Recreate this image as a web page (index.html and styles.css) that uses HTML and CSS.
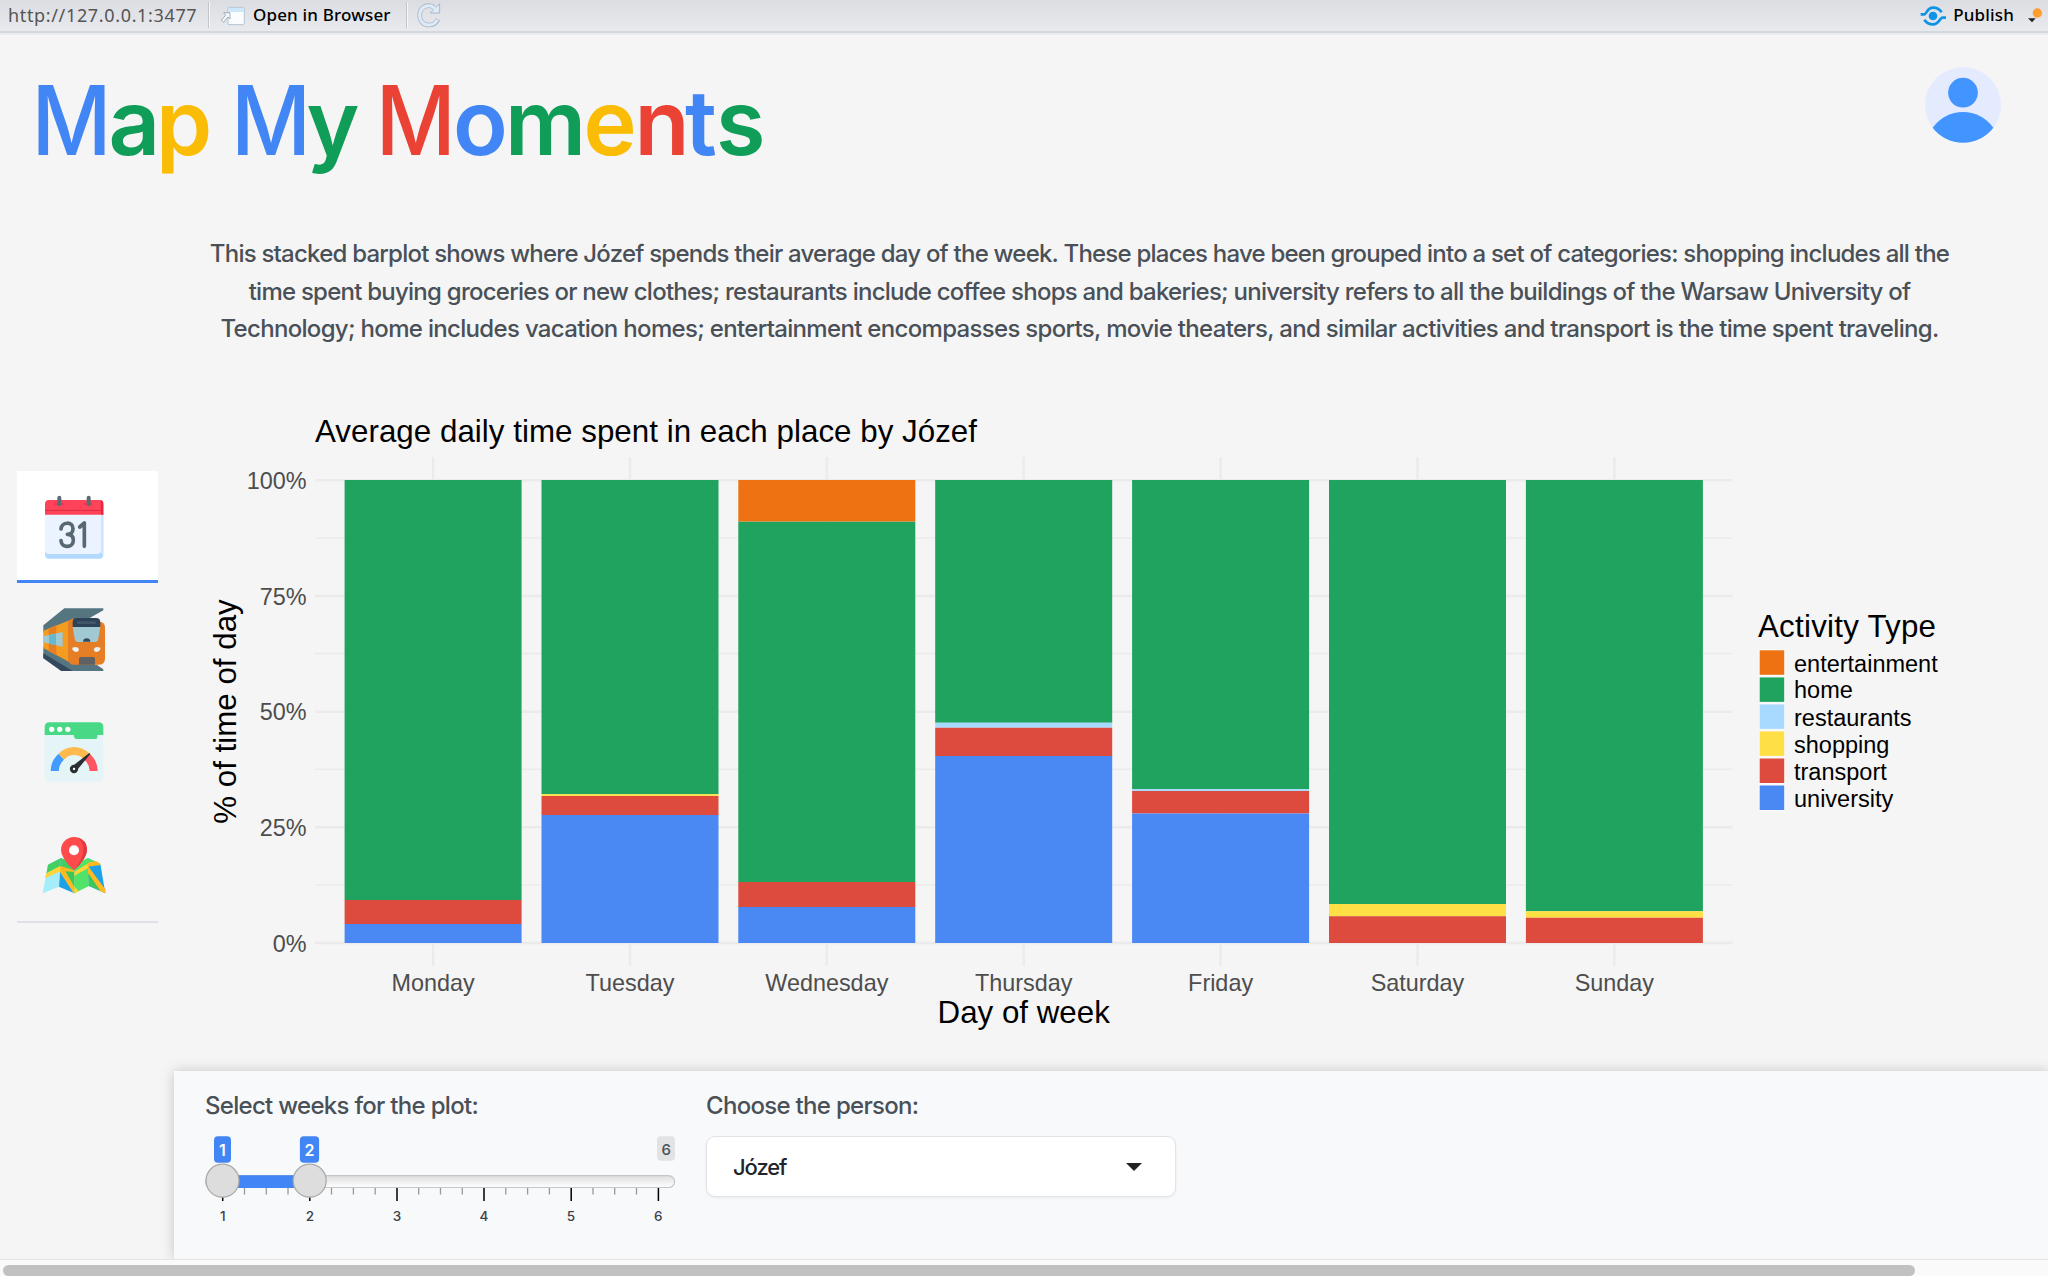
FILE: index.html
```html
<!DOCTYPE html>
<html lang="en">
<head>
<meta charset="utf-8">
<title>Map My Moments</title>
<link rel="stylesheet" href="styles.css">
</head>
<body>
<div class="toolbar">
  <span class="url">http://127.0.0.1:3477</span>
  <i class="sep"></i>
  <button class="tool open">
    <svg width="26" height="22" viewBox="60 15 78 66">
      <path d="M84 36V27q0-5 5-5h39q5 0 5 5v42q0 5-5 5H84z" fill="#fafcfe" stroke="#b3c3d4" stroke-width="3"/>
      <path d="M86 36v-8q0-4 4-4h37q4 0 4 4v8z" fill="#cfe7fa"/>
      <path d="M71 38h19v19l-6-6-13 16-7-7 13-14z" fill="#f3f6fa" stroke="#9fadbd" stroke-width="3" stroke-linejoin="round"/>
    </svg>
    <span>Open in Browser</span>
  </button>
  <i class="sep"></i>
  <svg class="reload" width="26" height="26" viewBox="648 6 78 78">
    <path d="M714 58q-9 17-27 17c-17 0-28-12-28-29s11-29 28-29q9 0 16 6" fill="none" stroke="#a9b8ca" stroke-width="14"/>
    <path d="M691 39h28V11z" fill="#dfeaf7" stroke="#a9b8ca" stroke-width="3"/>
    <path d="M712 59q-8 16-25 16c-17 0-28-12-28-29s11-29 28-29q12 0 21 13" fill="none" stroke="#dfeaf7" stroke-width="9"/>
  </svg>
  <button class="tool publish">
    <svg width="26" height="22" viewBox="219 14 78 66">
      <circle cx="258" cy="47" r="13" fill="#0f93e6"/>
      <path d="M221 42h11c7 0 8-20 26-20 12 0 20 5 26 14" fill="none" stroke="#0f93e6" stroke-width="8"/>
      <path d="M297 52h-11c-7 0-10 20-28 20-12 0-20-5-26-14" fill="none" stroke="#0f93e6" stroke-width="8"/>
    </svg>
    <span>Publish</span>
  </button>
  <svg class="caret" width="18" height="18" viewBox="540 12 54 54">
    <path d="M543 46h23l-11 12z" fill="#222"/><circle cx="571" cy="30" r="14" fill="#ff9d2e"/>
  </svg>
</div>

<header class="header">
  <svg class="logo" width="800" height="160" viewBox="0 35 800 160" role="img" aria-label="Map My Moments">
    <g class="cap">
      <text class="b" x="31.500" y="154.500" textLength="80" lengthAdjust="spacingAndGlyphs">M</text>
      <text class="b" x="231" y="154.500" textLength="80" lengthAdjust="spacingAndGlyphs">M</text>
      <text class="r" x="375.800" y="154.500" textLength="80" lengthAdjust="spacingAndGlyphs">M</text>
    </g>
    <g class="low">
      <text class="g" x="108.500" y="154.500">a</text><text class="y" x="156" y="154.500">p</text>
      <text class="g" x="306.500" y="154.500">y</text>
      <text class="b" x="453" y="154.500">o</text><text class="g" x="505" y="154.500">m</text><text class="y" x="583.500" y="154.500">e</text><text class="r" x="634.500" y="154.500">n</text><text class="b" x="685" y="154.500">t</text><text class="g" x="716" y="154.500">s</text>
    </g>
  </svg>
  <svg class="avatar" width="76" height="76" viewBox="232 202 228 228">
    <circle cx="346" cy="316" r="114" fill="#e4ebff"/>
    <circle cx="346" cy="279" r="44.5" fill="#4294ff"/>
    <path d="M255 384q36-47 91-47t91 47a114 114 0 0 1-182 0z" fill="#4294ff"/>
  </svg>
</header>

<main class="main">
  <nav class="tabs">
    <a class="tab active">
      <svg width="70" height="70" viewBox="120 99 210 210">
        <path d="M135 160h175v124q0 12-12 12H147q-12 0-12-12z" fill="#b3dafe"/>
        <path d="M135 160h168v110q0 12-12 12H147q-12 0-12-12z" fill="#eaf3ff"/>
        <path d="M303 160h7v118q0 4-7 4z" fill="#cde6ff"/>
        <path d="M135 164v-32q0-12 12-12h151q12 0 12 12v32z" fill="#ff4359"/>
        <path d="M302 120q8 2 8 12v32h-7z" fill="#e6283f"/>
        <path d="M135 151h170M163 132h30M250 132h27" stroke="#dd2c42" stroke-width="3"/>
        <path d="M178 113v20M266 113v20" stroke="#5b6b73" stroke-width="12" stroke-linecap="round"/>
        <path d="M183 207c2-22 36-24 36-1 0 11-7 17-17 17 11 0 18 6 18 18 0 24-36 24-37 1M239 201l14-12v70" fill="none" stroke="#58696f" stroke-width="11" stroke-linecap="round" stroke-linejoin="round"/>
      </svg>
    </a>
    <a class="tab">
      <svg width="70" height="70" viewBox="120 435 210 210">
        <path d="M130 496l63-51h117v6l-45 25-135 42z" fill="#557680"/>
        <path d="M130 560l90 50 70 4 20 14v5H184l-54-38z" fill="#557680"/>
        <path d="M130 580l88 53h-34l-54-39z" fill="#34495e"/>
        <path d="M130 512l90-36v137l-90-49z" fill="#f39c1f"/>
        <path d="M146 505l23-9v90l-23-12z" fill="#e67e26"/>
        <path d="M219 475l-15 10v118l22 10z" fill="#e67e26"/>
        <path d="M130 529l58-13v44l-58-13z" fill="#a1c9d4"/>
        <path d="M147 525l21-4v35l-21-5z" fill="#67b8cc"/>
        <path d="M220 486h82q13 2 13 18v92q0 18-20 18h-72q-18 0-18-18v-88q0-20 15-22z" fill="#e67e26"/>
        <path d="M218 500h83l-6 36q-2 10-11 10h-49q-9 0-11-10z" fill="#a1c9d4"/>
        <path d="M218 501v-14q0-13 13-13h57q13 0 13 13v14z" fill="#2f4358"/>
        <path d="M235 488h49" stroke="#43576b" stroke-width="8" stroke-linecap="round"/>
        <path d="M249 545q1-10 11-10t11 10z" fill="#34495e"/>
        <path d="M217 563q18-6 20 7-5 10-16 3-6-5-4-10zM301 563q-17-6-20 7 5 10 16 3 6-5 4-10z" fill="#edf1f4"/>
        <path d="M237 614v-17q0-6 6-6h36q6 0 6 6v17z" fill="#5f6163"/>
      </svg>
    </a>
    <a class="tab">
      <svg width="70" height="70" viewBox="120 87 210 210">
        <path d="M134 130h176v131q0 14-14 14H148q-14 0-14-14z" fill="#e4f4f7"/>
        <path d="M134 135v-24q0-14 14-14h148q14 0 14 14v24h-18v7q0 5-5 5h-57q-8 0-9-12z" fill="#48d886"/>
        <g fill="#fff"><circle cx="155" cy="118" r="8"/><circle cx="179" cy="118" r="8"/><circle cx="203.500" cy="118" r="8"/></g>
        <g fill="none" stroke-width="24">
          <path d="M164 243q0-25 20-43" stroke="#429cff"/>
          <path d="M184 200q16-17 38-17t39 17" stroke="#ffb94d"/>
          <path d="M261 200q20 18 20 43" stroke="#ff5560"/>
        </g>
        <path d="M268 189l3 3-39 47-13-12z" fill="#2b2f33"/>
        <circle cx="222" cy="237" r="8" fill="#fff" stroke="#2b2f33" stroke-width="9"/>
      </svg>
    </a>
    <a class="tab last">
      <svg width="70" height="70" viewBox="120 429 210 210">
        <path d="M144 524l39-20-6 86-49 20z" fill="#a6edfb"/>
        <path d="M144 524l39-20-3 26-41 22z" fill="#43cf61"/>
        <path d="M139 550l41-22-2 17-43 20z" fill="#ffd43b"/>
        <path d="M183 504l40 20v86l-46-20z" fill="#1ea2e6"/>
        <path d="M183 504l40 20v20l-42-14z" fill="#43cf61"/>
        <path d="M180 528l43 13v69h-2l-41-64z" fill="#ffb921"/>
        <path d="M196 544l27 2v44z" fill="#3dc65b"/>
        <path d="M223 524l40-20 4 84-44 22z" fill="#50e368"/>
        <path d="M223 545l42-25v14l-42 23z" fill="#ffd43b"/>
        <path d="M223 590l14 14-14 6z" fill="#ffd43b"/>
        <path d="M263 504l38 18 15 88-49-22z" fill="#1ea2e6"/>
        <path d="M263 504l25 11-25 12z" fill="#50e368"/>
        <path d="M263 518l25-5 13 8v4l-38 5z" fill="#ffb921"/>
        <path d="M264 528l52 70v12l-16-8-36-50z" fill="#ffb921"/>
        <path d="M265 550l36 52-34-14z" fill="#3dc65b"/>
        <path d="M222 541q-39-36-39-61a39 39 0 0 1 78 0q0 25-39 61z" fill="#ff4b4b"/>
        <path d="M231 442q30 7 30 38 0 25-39 61 28-36 28-61 0-27-19-38z" fill="#e03a40"/>
        <circle cx="222" cy="481" r="15" fill="#fff"/>
      </svg>
    </a>
  </nav>

  <section class="content">
    <p class="desc"><span class="l1">This stacked barplot shows where Józef spends their average day of the week. These places have been grouped into a set of categories: shopping includes all the</span>
    <span class="l2">time spent buying groceries or new clothes; restaurants include coffee shops and bakeries; university refers to all the buildings of the Warsaw University of</span>
    <span class="l3">Technology; home includes vacation homes; entertainment encompasses sports, movie theaters, and similar activities and transport is the time spent traveling.</span></p>

    <svg class="chart" width="1874" height="723" viewBox="174 348 1874 723">
      <g stroke="#ebebeb" fill="none">
        <path stroke-width="1.6" d="M315 538H1732.700M315 653.600H1732.700M315 769.300H1732.700M315 885H1732.700"/>
        <path stroke-width="2.400" d="M315 480.300H1732.700M315 596H1732.700M315 711.700H1732.700M315 827.300H1732.700M315 943H1732.700"/>
        <path stroke-width="2.400" d="M433.100 457V966M630 457V966M826.800 457V966M1023.700 457V966M1220.600 457V966M1417.500 457V966M1614.400 457V966"/>
      </g>
      <g class="bars">
        <path class="home" d="M344.600 480h177V900h-177zM541.500 480h177V794.300h-177zM738.300 521.500h177V882h-177zM935.200 480h177V722.700h-177zM1132.100 480h177V789.300h-177zM1329 480h177V904h-177zM1525.900 480h177V911.200h-177z"/>
        <path class="ent" d="M738.300 480h177v41.500h-177z"/>
        <path class="shop" d="M541.500 794.300h177v2h-177zM1329 904h177v12.300h-177zM1525.900 911.200h177v6.600h-177z"/>
        <path class="rest" d="M935.200 722.700h177v5h-177zM1132.100 789.300h177v2h-177z"/>
        <path class="trans" d="M344.600 900h177v24h-177zM541.500 796h177v19h-177zM738.300 882h177v25h-177zM935.200 727.700h177v28.300h-177zM1132.100 791h177v22.600h-177zM1329 916.300h177v26.600h-177zM1525.900 917.800h177v25.100h-177z"/>
        <path class="uni" d="M344.600 924h177v18.900h-177zM541.500 815h177v127.900h-177zM738.300 907h177v35.900h-177zM935.200 756h177v186.900h-177zM1132.100 813.600h177v129.300h-177z"/>
      </g>
      <text class="big" x="315" y="442" textLength="662">Average daily time spent in each place by Józef</text>
      <text class="big mid" x="1023.700" y="1022.500">Day of week</text>
      <text class="big mid" transform="translate(235.500 711.500) rotate(-90)">% of time of day</text>
      <g class="tick end">
        <text x="306.500" y="489">100%</text><text x="306.500" y="604.600">75%</text><text x="306.500" y="720.300">50%</text><text x="306.500" y="836">25%</text><text x="306.500" y="952">0%</text>
      </g>
      <g class="tick mid">
        <text x="433.100" y="991.200">Monday</text><text x="630" y="991.200">Tuesday</text><text x="826.800" y="991.200">Wednesday</text><text x="1023.700" y="991.200">Thursday</text><text x="1220.600" y="991.200">Friday</text><text x="1417.500" y="991.200">Saturday</text><text x="1614.400" y="991.200">Sunday</text>
      </g>
      <text class="big" x="1758" y="637.200" textLength="178">Activity Type</text>
      <g class="keys">
        <path fill="#f9f9f9" d="M1758.700 649.300h26.500v162.500h-26.500z"/>
        <path class="ent" d="M1759.700 650.300h24.500v24.500h-24.500z"/>
        <path class="home" d="M1759.700 677.400h24.500v24.500h-24.500z"/>
        <path class="rest" d="M1759.700 704.400h24.500v24.500h-24.500z"/>
        <path class="shop" d="M1759.700 731.400h24.500v24.500h-24.500z"/>
        <path class="trans" d="M1759.700 758.500h24.500v24.500h-24.500z"/>
        <path class="uni" d="M1759.700 785.500h24.500v24.500h-24.500z"/>
      </g>
      <g class="key">
        <text x="1794" y="671.600">entertainment</text><text x="1794" y="698.400">home</text><text x="1794" y="725.600">restaurants</text><text x="1794" y="752.700">shopping</text><text x="1794" y="779.700">transport</text><text x="1794" y="806.700">university</text>
      </g>
    </svg>
  </section>
</main>

<section class="panel">
  <div class="field weeks">
    <label class="label">Select weeks for the plot:</label>
    <svg class="slider" width="480" height="100" viewBox="200 1130 480 100">
      <defs><linearGradient id="rail" x2="0" y2="1"><stop offset="0" stop-color="#dedede"/><stop offset=".6" stop-color="#f2f2f2"/><stop offset="1" stop-color="#fff"/></linearGradient></defs>
      <rect x="205.600" y="1175.700" width="469" height="11.800" rx="5.900" fill="url(#rail)" stroke="#c4c6c8" stroke-width="1.200"/>
      <path fill="#4285f4" d="M223 1175.300h86v12.700h-86z"/>
      <path stroke="#999" stroke-width="1.300" d="M244.500 1188v6.500M266.300 1188v6.500M288 1188v6.500M331.500 1188v6.500M353.400 1188v6.500M375.200 1188v6.500M418.700 1188v6.500M440.500 1188v6.500M462.300 1188v6.500M505.800 1188v6.500M527.600 1188v6.500M549.400 1188v6.500M593 1188v6.500M614.700 1188v6.500M636.500 1188v6.500"/>
      <path stroke="#000" stroke-width="1.500" d="M222.700 1188v13M309.800 1188v13M397 1188v13M484 1188v13M571.200 1188v13M658.400 1188v13"/>
      <g fill="#ddd" stroke="#aaa" stroke-width="1.300"><circle cx="222.500" cy="1180.700" r="16.500"/><circle cx="309.700" cy="1180.700" r="16.500"/></g>
      <rect x="214" y="1136.300" width="17" height="26.400" rx="4" fill="#4285f4"/>
      <rect x="299.900" y="1136.300" width="19.200" height="26.400" rx="4" fill="#4285f4"/>
      <rect x="657" y="1136.300" width="18" height="24.400" rx="4" fill="#e1e3e5"/>
      <g class="flag"><text x="222.500" y="1155.500">1</text><text x="309.500" y="1155.500">2</text><text class="max" x="666.200" y="1154.500">6</text></g>
      <g class="num"><text x="222.700" y="1220.500">1</text><text x="309.800" y="1220.500">2</text><text x="397" y="1220.500">3</text><text x="484" y="1220.500">4</text><text x="571" y="1220.500">5</text><text x="658.200" y="1220.500">6</text></g>
    </svg>
  </div>
  <div class="field person">
    <label class="label">Choose the person:</label>
    <div class="select"><span>Józef</span><i class="arrow"></i></div>
  </div>
</section>
<div class="scroll"><div class="thumb"></div></div>
</body>
</html>
```
FILE: styles.css
```css
* { box-sizing: border-box; }
body {
  margin: 0;
  width: 2048px;
  height: 1276px;
  overflow: hidden;
  display: flex;
  flex-direction: column;
  background: #f5f5f5;
  font-family: Inter, "Open Sans", sans-serif;
}
.toolbar {
  height: 35px;
  flex: none;
  display: flex;
  align-items: center;
  padding: 0 3px 5px 8px;
  background: linear-gradient(#dcdde2, #e9eaee 31px, #d4d8de 31px, #d4d8de 33px, #e9ebef 33px);
  font: 500 17px/30px "Noto Sans", sans-serif;
  color: #000;
}
.url { color: #555; font-size: 18px; font-weight: 400; width: 200px; letter-spacing: .65px; white-space: nowrap; }
.sep { width: 2px; height: 26px; background: linear-gradient(90deg, #c4c5c9 50%, #f6f6f8 50%); }
.tool { display: flex; align-items: center; gap: 7px; border: 0; padding: 0; background: none; font: inherit; color: inherit; white-space: nowrap; letter-spacing: .16px; }
.tool svg { position: relative; top: 1px; }
.open { margin-left: 10px; width: 186px; }
.reload { margin-left: 8px; }
.publish { margin-left: auto; }
.caret { margin-left: 13px; margin-top: 1px; }
.header { height: 200px; flex: none; display: flex; justify-content: space-between; align-items: flex-start; padding-right: 47px; }
.avatar { margin-top: 32px; }
.logo text { font-family: Inter, sans-serif; }
.cap { font-size: 96px; font-weight: 540; }
.low { font-size: 90px; font-weight: 600; }
.b { fill: #4285f4; }
.g { fill: #0f9d58; }
.y { fill: #fbbc05; }
.r { fill: #ea4335; }
.main { height: 836px; flex: none; display: flex; }
.tabs { width: 141px; margin: 236px 16px 0 17px; flex: none; display: flex; flex-direction: column; }
.tab { height: 114px; padding: 22px 0 0 23px; }
.tab.active { height: 112px; background: #fff; border-bottom: 3px solid #4285f4; }
.tab.last { height: 112px; border-bottom: 2px solid #dee2e6; }
.tab svg, .chart, .slider { display: block; }
.content { flex: 1; display: flex; flex-direction: column; }
.desc { margin: 0 63px 0 0; height: 113px; display: flex; flex-direction: column; align-items: center; font-size: 24px; font-weight: 450; line-height: 37.500px; color: #495057; white-space: nowrap; }
.l1 { letter-spacing: -.775px; }
.l2 { letter-spacing: -.755px; }
.l3 { letter-spacing: -.68px; }
.home { fill: #21a360; }
.ent { fill: #ee7112; }
.rest { fill: #a8d9ff; }
.shop { fill: #ffdf46; }
.trans { fill: #dd4b3e; }
.uni { fill: #4a89f3; }
.chart text { font-family: "Liberation Sans", Arial, sans-serif; }
.big { font-size: 31.300px; fill: #000; }
.tick { font-size: 23.400px; fill: #4d4d4d; }
.key { font-size: 23.500px; fill: #000; }
.mid { text-anchor: middle; }
.end { text-anchor: end; }
.panel { height: 188px; margin-left: 174px; flex: none; display: flex; padding: 0 0 0 26px; background: #f8f9fb; box-shadow: 0 0 12px rgba(0, 0, 0, .2); }
.field { display: flex; flex-direction: column; }
.weeks { width: 506px; }
.label { height: 59px; padding-top: 16px; line-height: 37px; font-size: 24px; font-weight: 450; letter-spacing: -.7px; color: #495057; white-space: nowrap; }
.weeks .label { padding-left: 5px; }
.person .label { padding-left: 0; }
.select { margin-top: 6px; width: 470px; height: 61px; border: 1.500px solid #e0e3e7; border-radius: 9px; background: #fff; display: flex; align-items: center; justify-content: space-between; padding: 0 33px 0 26px; font-size: 22px; letter-spacing: -1.1px; font-weight: 450; color: #212529; box-shadow: 0 1px 3px rgba(0, 0, 0, .06); }
.arrow { border: 8px solid transparent; border-top-color: #222; border-bottom: 0; }
.flag { font-size: 16px; font-weight: 600; fill: #fff; text-anchor: middle; }
.flag .max { font-size: 15px; font-weight: 500; fill: #495057; }
.num { font-size: 13.500px; font-weight: 500; fill: #3c4248; text-anchor: middle; }
.scroll { height: 17px; flex: none; position: relative; background: #fafafa; border-top: 1px solid #e4e4e4; padding: 5px 0 0 3px; }
.thumb { width: 1912px; height: 11px; border-radius: 6px; background: #c1c1c1; }
```
